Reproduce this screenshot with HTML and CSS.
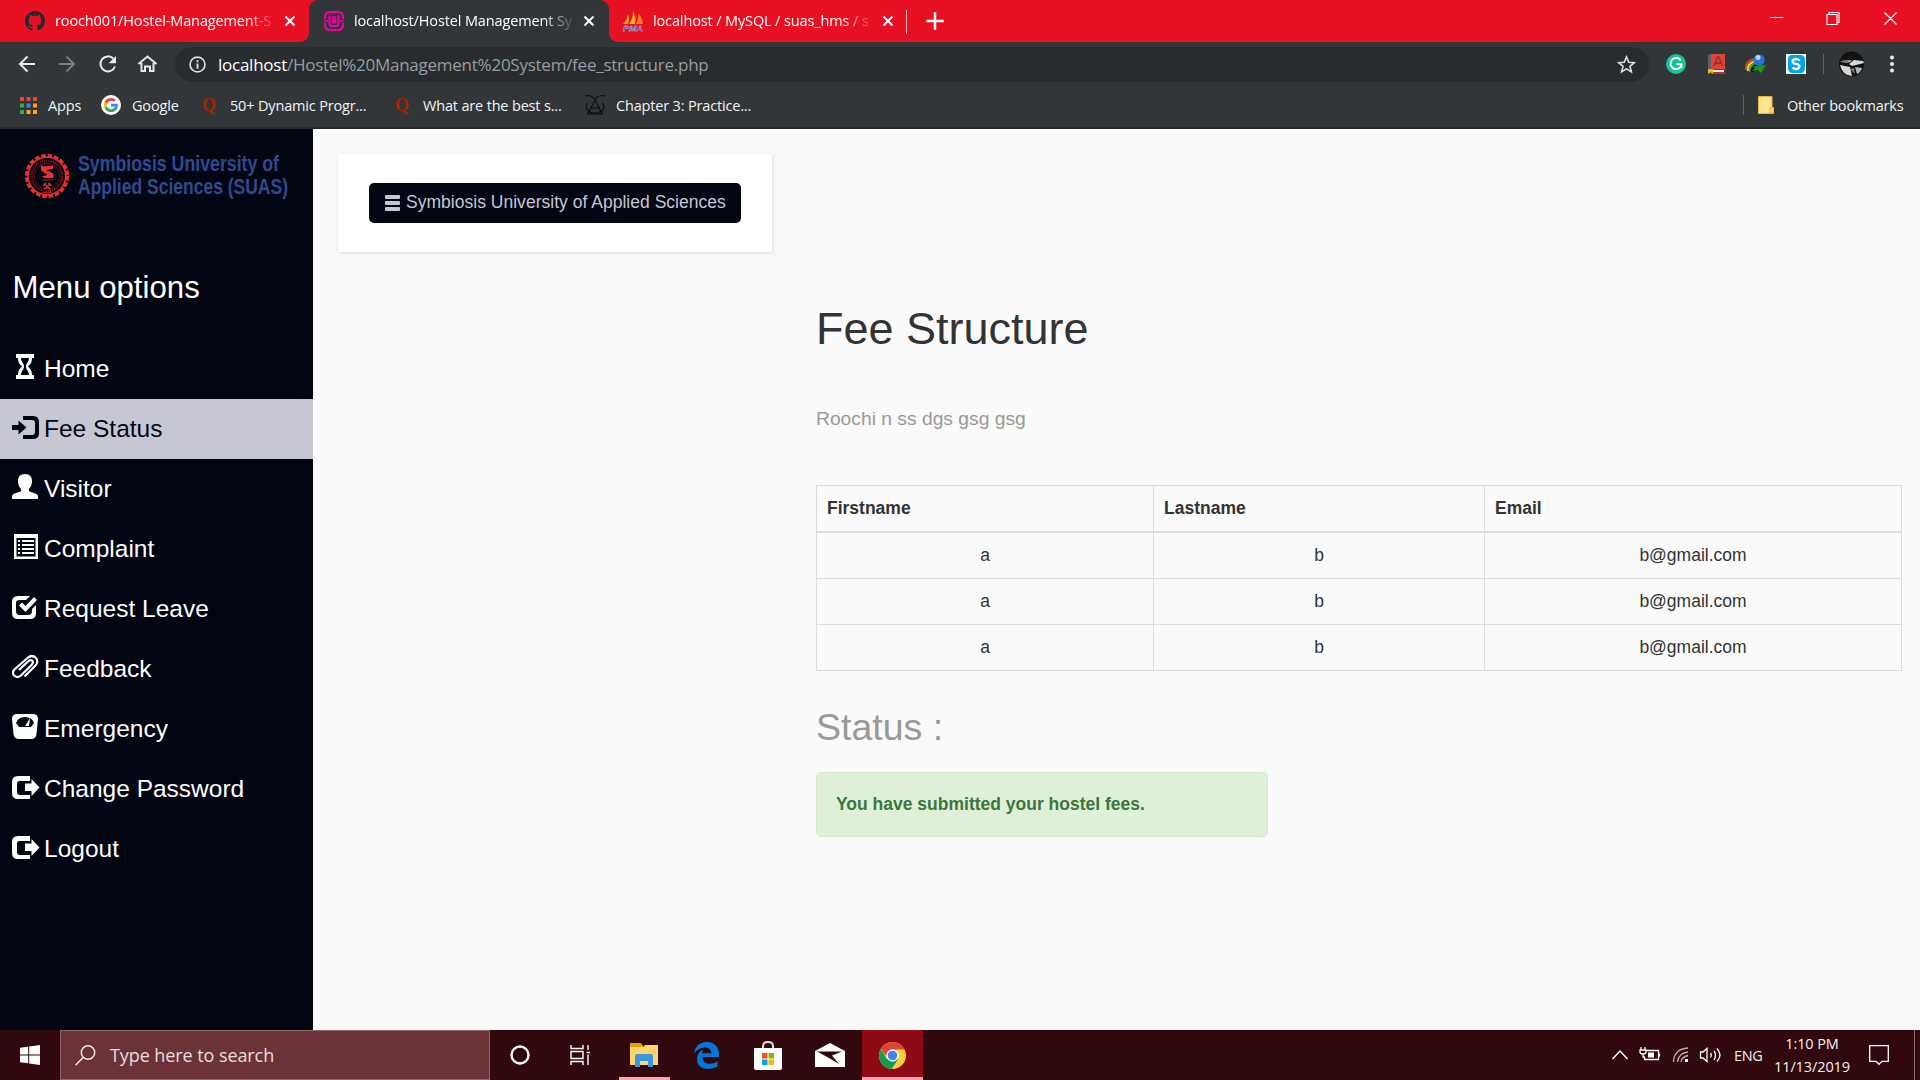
FILE: index.html
```html
<!DOCTYPE html>
<html lang="en">
<head>
<meta charset="utf-8">
<title>localhost/Hostel Management System</title>
<link rel="stylesheet" href="styles.css">
</head>
<body>
<div class="screen">
  <header class="browser">
    <div class="tabstrip">
      <div class="tab tab-first">
        <svg class="fav" viewBox="0 0 16 16"><path fill="#24292e" d="M8 0C3.58 0 0 3.58 0 8c0 3.54 2.29 6.53 5.47 7.59.4.07.55-.17.55-.38 0-.19-.01-.82-.01-1.49-2.01.37-2.53-.49-2.69-.94-.09-.23-.48-.94-.82-1.13-.28-.15-.68-.52-.01-.53.63-.01 1.08.58 1.23.82.72 1.21 1.87.87 2.33.66.07-.52.28-.87.51-1.07-1.78-.2-3.64-.89-3.64-3.95 0-.87.31-1.59.82-2.15-.08-.2-.36-1.02.08-2.12 0 0 .67-.21 2.2.82.64-.18 1.32-.27 2-.27s1.36.09 2 .27c1.53-1.04 2.2-.82 2.2-.82.44 1.1.16 1.92.08 2.12.51.56.82 1.27.82 2.15 0 3.07-1.87 3.75-3.65 3.95.29.25.54.73.54 1.48 0 1.07-.01 1.93-.01 2.2 0 .21.15.46.55.38A8.01 8.01 0 0 0 16 8c0-4.42-3.58-8-8-8z"/></svg>
        <span class="tab-title">rooch001/Hostel-Management-S</span>
        <svg class="tab-close" viewBox="0 0 12 12"><path d="M1.500 1.500l9 9M10.500 1.500l-9 9"/></svg>
      </div>
      <div class="tab tab-active">
        <svg class="fav" viewBox="0 0 20 20" fill="none" stroke="#f400a1"><path stroke-width="2" d="M1 8V6q0-5 5-5h8q5 0 5 5v2M1 12v2q0 5 5 5h8q5 0 5-5v-2"/><path stroke-width="1.600" d="M0 10h4M16 10h4"/><path stroke-width="2.200" d="M5.500 4.500V12q0 3 2.500 3h4q2.500 0 2.500-3V4.500"/><path stroke-width="2" d="M8.700 5v6.500h2.600V5"/></svg>
        <span class="tab-title">localhost/Hostel Management Sy</span>
        <svg class="tab-close" viewBox="0 0 12 12"><path d="M1.500 1.500l9 9M10.500 1.500l-9 9"/></svg>
      </div>
      <div class="tab tab-last">
        <svg class="fav" viewBox="0 0 20 20"><path fill="#f89c0e" d="M0 13Q4 9 5 3q2 5 0 10zM6 13Q10 8 10 0q4 7 2 13z"/><path fill="#ff7a1a" d="M13 13q3-5 2-11 5 6 5 11z"/><path fill="#ffc14a" d="M7 13Q10.500 7 10.500 2q1 6-.5 11z"/><text x="0" y="19.600" class="pma" textLength="20" lengthAdjust="spacingAndGlyphs">PMA</text></svg>
        <span class="tab-title">localhost / MySQL / suas_hms / s</span>
        <svg class="tab-close" viewBox="0 0 12 12"><path d="M1.500 1.500l9 9M10.500 1.500l-9 9"/></svg>
      </div>
      <div class="tab-divider"></div>
      <svg class="tab-new" viewBox="0 0 16 16"><path d="M8 1v14M1 8h14"/></svg>
      <svg class="win-buttons" viewBox="0 0 130 14" fill="none" stroke="#fff" stroke-width="1.100"><path d="M0 5.500h13M56.500 2.500h10v10h-10zM58.500 2.500v-2h10v10h-2M114 .5l12 12M126 .5l-12 12"/></svg>
    </div>

    <div class="toolbar">
      <svg class="nav-icons" viewBox="0 0 140 20" fill="none" stroke="#e8eaed" stroke-width="2"><path d="M17 10H2.500M9.500 2.500L2 10l7.500 7.500"/><path stroke="#7b7e81" d="M41 10h14.500M48.500 2.500L56 10l-7.500 7.500"/><path d="M95.500 4.800A7.500 7.500 0 1 0 97 12.500"/><path fill="#e8eaed" stroke="none" d="M98 2v7.300h-7.300z"/><path d="M120.500 10l9-7.500 9 7.500M123.500 9v8h3.500v-4.500h5V17h3.500V9"/></svg>
      <div class="omnibox">
        <svg class="info" viewBox="0 0 16 16"><circle cx="8" cy="8" r="7" fill="none" stroke="#dcdee0" stroke-width="1.600"/><path d="M8 7v5M8 4v1.800" stroke="#dcdee0" stroke-width="1.800"/></svg>
        <span class="url"><b>localhost</b>/Hostel%20Management%20System/fee_structure.php</span>
        <svg class="star" viewBox="0 0 18 18"><path d="M9 1.800l2.100 5 5.300.4-4.100 3.500 1.300 5.200L9 13.100l-4.600 2.800 1.300-5.200L1.600 7.200l5.300-.4z" fill="none" stroke="#dcdee0" stroke-width="1.500"/></svg>
      </div>
      <svg class="extensions" viewBox="0 0 232 28">
        <circle cx="10" cy="14" r="10" fill="#15c39a"/><path d="M14.800 10.500a5.600 5.600 0 1 0 .6 5M10.500 14.200h5v4" fill="none" stroke="#fff" stroke-width="1.900"/>
        <path fill="#5c6065" d="M42 4.500h4v19h-4z"/><path fill="#db4437" d="M45 4h14v15.500H45z"/><path fill="#eee" d="M46 20h12v2H46z"/><path fill="#b93221" d="M46 22h13v2H46z"/><path fill="#f4b400" d="M42 19h5v5l-2.500-2-2.500 2z"/><path d="M48 16l3.700-9h1l3.800 9M49.500 13h5.500" fill="none" stroke="#a52d25" stroke-width="1.800"/>
        <path fill="none" stroke="#d8402f" stroke-width="2" d="M80 20q-1-9 9-11"/><path fill="none" stroke="#f1d92c" stroke-width="2" d="M82 21q-1-8 8-10"/><path fill="none" stroke="#3aa53a" stroke-width="2" d="M84 22q-1-7 7-9"/><path d="M86 22q0-6 6-7" fill="none" stroke="#111" stroke-width="3"/><circle cx="93" cy="10" r="5.800" fill="#2c6edb"/><circle cx="92" cy="7.500" r="2.500" fill="#b8d4ff"/><path fill="#159b1c" d="M86 16.500l14-1.500-5 8-3-3-6 1 3-3z"/>
        <path fill="#f4f8fb" d="M120 4h20v20h-20z"/><path fill="#00a5e6" d="M122 9q0-4 4-4h8q5 0 5 5v8q0 5-5 5h-7q-5 0-5-5z"/><path d="M134 10.500q-3-2-6-1t0 4l3 .7q4 1.500 1.500 4.200-3 1.500-6-.8" fill="none" stroke="#fff" stroke-width="2.400"/>
        <path d="M157.500 4v20" stroke="#606367"/>
        <circle cx="185.500" cy="14" r="12.500" fill="#111"/><path fill="#d7d7d7" d="M174 15l10 2 2 9q-10-1-12-11zM188 10l9 1 1 2-12 3-3-2zM179 11l7-1-2 2-5 1z"/><path fill="#b7b7b7" d="M189 17l7 1q-1 4-5 6z"/><path fill="#777" d="M174 12q4-3 11-2l-5 3zM184 19l4-1 1 6z"/>
        <g fill="#e8eaed"><circle cx="226" cy="7.500" r="2"/><circle cx="226" cy="14" r="2"/><circle cx="226" cy="20.500" r="2"/></g>
      </svg>
    </div>

    <nav class="bookmarks">
      <a class="bm bm-apps"><svg class="apps" viewBox="0 0 17 17"><path fill="#ea4335" d="M0 0h4v4H0zM6.500 0h4v4h-4zM13 0h4v4h-4z"/><path fill="#34a853" d="M0 6.500h4v4H0zM0 13h4v4H0z"/><path fill="#2d8cf0" d="M6.500 6.500h4v4h-4z"/><path fill="#fba60b" d="M13 6.500h4v4h-4zM6.500 13h4v4h-4zM13 13h4v4h-4z"/></svg>Apps</a>
      <a class="bm bm-google"><svg class="fav" viewBox="0 0 48 48"><circle cx="24" cy="24" r="24" fill="#fff"/><g transform="translate(7 7) scale(.71)"><path fill="#EA4335" d="M24 9.500c3.540 0 6.710 1.220 9.210 3.600l6.850-6.850C35.900 2.380 30.470 0 24 0 14.620 0 6.510 5.380 2.560 13.220l7.980 6.190C12.430 13.720 17.740 9.500 24 9.500z"/><path fill="#4285F4" d="M46.980 24.550c0-1.570-.15-3.090-.38-4.550H24v9.020h12.940c-.58 2.960-2.260 5.480-4.780 7.180l7.730 6c4.510-4.180 7.090-10.360 7.090-17.650z"/><path fill="#FBBC05" d="M10.530 28.590c-.48-1.450-.76-2.990-.76-4.590s.27-3.140.76-4.590l-7.980-6.190C.92 16.460 0 20.120 0 24c0 3.880.92 7.540 2.560 10.780l7.970-6.190z"/><path fill="#34A853" d="M24 48c6.480 0 11.930-2.130 15.890-5.810l-7.730-6c-2.150 1.450-4.920 2.300-8.160 2.300-6.260 0-11.570-4.220-13.470-9.910l-7.980 6.190C6.510 42.620 14.620 48 24 48z"/></g></svg>Google</a>
      <a class="bm bm-q1"><span class="quora">Q</span>50+ Dynamic Progr...</a>
      <a class="bm bm-q2"><span class="quora">Q</span>What are the best s...</a>
      <a class="bm bm-ch"><svg class="fav" viewBox="0 0 20 20" fill="none" stroke="#0a0b0c" stroke-width="1.100"><path d="M0 .8h4q4 0 7 6t6 12M20 .8h-4q-4 0-7 6t-6 12M6 13h8M2 19h16"/><path d="M2.500 8Q-1 13 4 16.500t12 0Q21 13 17.500 8"/></svg>Chapter 3: Practice...</a>
      <div class="bm-divider"></div>
      <a class="bm bm-other"><svg class="folder" viewBox="0 0 16 18"><path fill="#ffe391" stroke="#e5b93c" d="M.500.500h13.500v11h1.500v6H.500z"/><path fill="#ffd35c" stroke="#e5b93c" d="M12 12h3.500v5H12z"/></svg>Other bookmarks</a>
    </nav>
  </header>

  <div class="page">
    <aside class="sidebar">
      <svg class="logo" viewBox="0 0 270 50">
        <circle cx="23" cy="23" r="20.600" fill="none" stroke="#e8322f" stroke-width="3" stroke-dasharray="4.670 1.800"/>
        <circle cx="23" cy="23" r="18.800" fill="none" stroke="#e8322f" stroke-width="1.600"/>
        <circle cx="23" cy="23" r="15.200" fill="none" stroke="#a52026" stroke-width="2" stroke-dasharray="1 1.200"/>
        <circle cx="23" cy="23" r="12.800" fill="none" stroke="#8c1c22" stroke-width=".7"/>
        <path fill="#e8322f" d="M17 12l3 1.500 9-1v3.500l-7 1 7.500 3.500v4.500h-9l-3-1.500 6-1.500-6.500-4.500z"/><path d="M20 30.500l6.500 6M26.500 30.500l-6.500 6M19 33l3-3M27.500 33l-3-3" stroke="#e8322f" stroke-width="1.300"/><path d="M18 27h11M18 39.500h10" stroke="#a52026"/>
        <text x="54" y="18" textLength="201" lengthAdjust="spacingAndGlyphs">Symbiosis University of</text>
        <text x="54" y="41" textLength="210" lengthAdjust="spacingAndGlyphs">Applied Sciences (SUAS)</text>
      </svg>
      <h3 class="menu-title">Menu options</h3>
      <ul class="menu">
        <li><svg class="gl" viewBox="0 0 28 26"><path fill-rule="evenodd" d="M4 0h18v4h-2c0 5-2 6.500-4 8.500 2 2 4 3.500 4 8.500h2v4H4v-4h2c0-5 2-6.500 4-8.500C8 10.500 6 9 6 4H4zM9 4c0 4 3 5 3 8.500S9 17 9 21h8c0-4-3-5-3-8.500S17 8 17 4z"/></svg>Home</li>
        <li class="active"><svg class="gl" viewBox="0 0 28 26"><path d="M0 11h6.500V6.500l8 7-8 7V16H0z"/><path d="M11 2h10q6 0 6 6v11q0 6-6 6H11v-4h9q3 0 3-3V9q0-3-3-3h-9z"/></svg>Fee Status</li>
        <li><svg class="gl" viewBox="0 0 28 26"><path d="M13 0c5 0 7 3 7 7 0 3-1 6-3 8v2c3 2 9 2.500 9 5v3H0v-3c0-2.500 6-3 9-5v-2c-2-2-3-5-3-8 0-4 2-7 7-7z"/></svg>Visitor</li>
        <li><svg class="gl" viewBox="0 0 28 26"><path fill-rule="evenodd" d="M2 0h24v25H2zM4.500 4v18.500h19V4z"/><path d="M6 6h2v2H6zM10 6h12v2H10zM6 10h2v2H6zM10 10h12v2H10zM6 14h2v2H6zM10 14h12v2H10zM6 18h2v2H6zM10 18h12v2H10z"/></svg>Complaint</li>
        <li><svg class="gl" viewBox="0 0 28 26"><path d="M6 2h12l-4 4H7.500Q4 6 4 9v8q0 4 4 4h8q4 0 4-4v-2l4-4v8q0 6-6 6H6q-6 0-6-6V8q0-6 6-6z"/><path d="M7 11.500l3-3 3.500 3.500L22 3l3 3-11.500 12z"/></svg>Request Leave</li>
        <li><svg class="gl" viewBox="0 0 28 26"><path fill="none" stroke="currentColor" stroke-width="2.200" d="M12.500 22.500L23 12q4-4 1-8-4-4-8.500 0L3 15q-3.500 3-1 6.500 3.500 3 7 0L19.500 11q2.500-3 .5-4.500-2-1-4 1L7 16"/></svg>Feedback</li>
        <li><svg class="gl" viewBox="0 0 28 26"><path fill-rule="evenodd" d="M5 0h16q5 0 5 5l-1.500 15q-.5 5-5.500 5H7q-5 0-5.500-5L0 5q0-5 5-5zM4 9l3 4h12l3-4q-2-6-9-6T4 9z"/><path d="M13 12l5-8-1 8z"/></svg>Emergency</li>
        <li><svg class="gl" viewBox="0 0 28 26"><path d="M18 7H7.500Q5 7 5 10v8q0 3 3 3h10v4H6q-6 0-6-6V8q0-6 6-6h12z"/><path d="M13 9.500h6.500V5l8 8.500-8 8.500v-5H13z"/></svg>Change Password</li>
        <li><svg class="gl" viewBox="0 0 28 26"><path d="M18 7H7.500Q5 7 5 10v8q0 3 3 3h10v4H6q-6 0-6-6V8q0-6 6-6h12z"/><path d="M13 9.500h6.500V5l8 8.500-8 8.500v-5H13z"/></svg>Logout</li>
      </ul>
    </aside>
    <div class="content">
      <div class="navbar"><button class="brand-btn"><svg class="burger" viewBox="0 0 15 16"><path d="M1 0h13q1 0 1 1v2q0 1-1 1H1Q0 4 0 3V1q0-1 1-1zM1 6h13q1 0 1 1v2q0 1-1 1H1q-1 0-1-1V7q0-1 1-1zM1 12h13q1 0 1 1v2q0 1-1 1H1q-1 0-1-1v-2q0-1 1-1z"/></svg><span>Symbiosis University of Applied Sciences</span></button></div>
      <main class="main">
        <h1>Fee Structure</h1>
        <p class="note">Roochi n ss dgs gsg gsg</p>
        <table class="fees">
          <colgroup><col class="c1"><col class="c2"><col class="c3"></colgroup>
          <thead><tr><th>Firstname</th><th>Lastname</th><th>Email</th></tr></thead>
          <tbody>
            <tr><td>a</td><td>b</td><td>b@gmail.com</td></tr>
            <tr><td>a</td><td>b</td><td>b@gmail.com</td></tr>
            <tr><td>a</td><td>b</td><td>b@gmail.com</td></tr>
          </tbody>
        </table>
        <h2>Status :</h2>
        <div class="alert">You have submitted your hostel fees.</div>
      </main>
    </div>
  </div>

  <footer class="taskbar">
    <div class="start"><svg class="i-start" viewBox="0 0 20 20"><path fill="#fff" d="M0 2.800L8.200 1.700v7.800H0zM9.200 1.500L20 0v9.500H9.200zM0 10.500h8.200v7.800L0 17.200zM9.200 10.500H20V20L9.200 18.500z"/></svg></div>
    <div class="search"><svg class="i-search" viewBox="0 0 21 21" fill="none" stroke="#f0e6e7" stroke-width="1.500"><circle cx="13" cy="7.500" r="6.700"/><path d="M8.300 12.300L.500 20.300"/></svg>Type here to search</div>
    <div class="task"><svg class="i20" viewBox="0 0 20 20"><circle cx="10" cy="10" r="8.500" fill="none" stroke="#fff" stroke-width="2.400"/></svg></div>
    <div class="task task-view"><svg class="i20" viewBox="0 0 20 20" fill="none" stroke="#fff" stroke-width="1.400"><path d="M1 0v3.500h12V0M1 20v-3.500h12V20M1 6.500h12v7H1zM18 0v5M18 9.500V20M16.500 7.500h3.500"/></svg></div>
    <div class="task open"><svg class="i-exp" viewBox="0 0 28 24"><path fill="#e0a10a" d="M0 0h11l2 3v5H0z"/><path fill="#ffd668" d="M0 4h13l2-2h13v20H0z"/><path fill="#3a96dd" d="M5 24V13q0-2 2-2h14q2 0 2 2v11h-5v-6h-8v6z"/></svg></div>
    <div class="task task-edge"><svg class="i-edge" viewBox="0 0 25 27"><path fill="#0078d7" d="M0 12C1 4 6 0 13 0c8 0 12 6 12 12v3H8.500c0 8 9 8 15 4.500v5C13 29.500 3 27 3 17c0-5 3-8 6.500-9.500C8.500 9 8.300 10 8.300 11.200h9C17.500 4 6 3 0 12z"/></svg></div>
    <div class="task task-store"><svg class="i-store" viewBox="0 0 28 29"><path d="M9 8V5q0-4 5-4t5 4v3" fill="none" stroke="#ddd" stroke-width="2"/><path fill="#fff" d="M0 7h28v20q0 2-2 2H2q-2 0-2-2z"/><path fill="#f25022" d="M8 12h5.500v5.500H8z"/><path fill="#7fba00" d="M14.500 12H20v5.500h-5.500z"/><path fill="#00a4ef" d="M8 18.500h5.500V24H8z"/><path fill="#ffb900" d="M14.500 18.500H20V24h-5.500z"/></svg></div>
    <div class="task task-mail"><svg class="i-mail" viewBox="0 0 30 24"><path fill="#fff" d="M0 8L15 0l15 8v16H0z"/><path fill="#30080d" d="M2 8.500h25l-10 4 7 8.500L14 15z"/></svg></div>
    <div class="task open chrome"><svg class="i-chrome" viewBox="0 0 28 28"><circle cx="14" cy="14" r="14" fill="#ffcd40"/><path fill="#0f9d58" d="M1.900 7A14 14 0 0 0 13 28l7-10.500-6-3.500-6 3.500z"/><path fill="#db4437" d="M14 14H7L1.900 7A14 14 0 0 1 26.500 7.800H14z"/><circle cx="14" cy="14" r="6.400" fill="#fff"/><circle cx="14" cy="14" r="5" fill="#4285f4"/></svg></div>
    <svg class="tray" viewBox="0 0 110 24" fill="none" stroke="#fff" stroke-width="1.300"><path d="M.5 16l7.500-8 7.500 8"/><path d="M34.500 7.500h12v9h-14v-3M47.500 10.500v3M29 4v3M33 4v3M28 7h6v2q0 2-3 2t-3-2zM31 11v3h1.500"/><path fill="#fff" stroke="none" d="M36 9.500h6v5h-6z"/><path stroke="#bfaeb0" d="M61.500 19Q62 6 76 5M65.500 19q1-9 10.500-10M69 19q.5-5 7-6.500"/><path fill="#fff" stroke="none" d="M73 16h3v3h-3z"/><path d="M88.500 9h2.500l4-3.500v13L91 15h-2.500zM98.500 10q1.500 2 0 4.500M102 8q3 4 0 9M105 5.500q6 6.500 0 13"/></svg>
    <span class="lang">ENG</span>
    <div class="clock"><span class="time">1:10 PM</span><span class="date">11/13/2019</span></div>
    <svg class="i-note" viewBox="0 0 20 20"><path d="M.7.700h18.600v15.600H13l-3 3-3-3H.700z" fill="none" stroke="#fff" stroke-width="1.300"/></svg>
    <div class="peek"></div>
  </footer>
</div>
</body>
</html>
```
FILE: styles.css
```css
* { box-sizing: border-box; }
body { margin: 0; font-family: "Liberation Sans", Arial, sans-serif; font-size: 17.5px; line-height: 25px; color: #333; }
svg { display: block; flex: none; }
.screen { width: 1920px; height: 1080px; display: flex; flex-direction: column; overflow: hidden; }

.browser { height: 129px; background: #323639; color: #f1f3f4; font-family: "Open Sans", "Noto Sans", sans-serif; border-bottom: 2px solid #27292c; }
.tabstrip { height: 42px; display: flex; background: linear-gradient(#e81123 20px, #323639 20px); font-size: 14.5px; line-height: 40px; letter-spacing: -.13px; }
.tab { display: flex; align-items: center; height: 42px; background: #e81123; color: #fff; padding-bottom: 1px; }
.tab-first { width: 309px; padding-left: 25px; border-bottom-right-radius: 9px; }
.tab-active { width: 300px; padding-left: 15px; background: #323639; border-radius: 9px 9px 0 0; }
.tab-last { width: 298px; padding-left: 14px; border-bottom-left-radius: 9px; }
.fav { width: 20px; height: 20px; overflow: visible; }
.pma { font: italic bold 8px "Liberation Sans", sans-serif; fill: #31459a; stroke: #d8d8f0; stroke-width: .3px; letter-spacing: 0; }
.tab-title { width: 220px; margin-left: 10px; white-space: nowrap; -webkit-mask-image: linear-gradient(90deg, #000 188px, transparent 222px); mask-image: linear-gradient(90deg, #000 188px, transparent 222px); }
.tab-close { width: 12px; height: 12px; margin-left: 9px; fill: none; stroke: #fff; stroke-width: 1.9; }
.tab-divider { width: 13px; background: linear-gradient(#ffb5bb, #ffb5bb) 0 10px / 1px 24px no-repeat #e81123; margin-left: -1px; }
.tab-new { width: 42px; height: 42px; padding: 13px 16px 13px 6px; background: #e81123; fill: none; stroke: #fff; stroke-width: 2; }
.tab-new { padding: 11px 16px 11px 6px; }
.win-buttons { flex: 1; height: 42px; padding: 12px 17px 16px 807px; background: #e81123; }

.toolbar { height: 44px; display: flex; align-items: center; }
.nav-icons { width: 140px; height: 20px; margin-left: 18px; }
.omnibox { width: 1474px; height: 35px; margin-left: 17px; border-radius: 18px; background: #282c2f; display: flex; align-items: center; padding: 0 13px 0 14px; margin-top: 1px; }
.info { width: 17px; height: 17px; }
.url { flex: 1; margin-left: 12px; font-size: 17px; letter-spacing: -.25px; color: #989da1; white-space: nowrap; }
.url b { font-weight: 400; color: #fff; }
.star { width: 19px; height: 19px; }
.extensions { width: 232px; height: 28px; margin-left: 17px; }

.bookmarks { display: flex; align-items: center; height: 38px; font-size: 14.5px; letter-spacing: -.17px; padding-left: 20px; }
.bm { display: flex; align-items: center; white-space: nowrap; }
.apps { width: 17px; height: 17px; margin-right: 11px; }
.bm .fav { margin-right: 11px; }
.bm-apps { width: 81px; }
.bm-google { width: 101px; }
.bm-q1 { width: 193px; }
.bm-q2 { width: 190px; }
.bm-ch { width: 1158px; }
.quora { width: 28px; font: bold 18px "Liberation Serif", serif; color: #a82400; }
.bm-divider { width: 1px; height: 20px; background: #606367; margin-right: 14px; }
.folder { width: 16px; height: 18px; margin-right: 13px; }

.page { height: 901px; display: flex; background: #fafafa; }
.sidebar { width: 313px; background: #020512; color: #fff; }
.logo { width: 270px; height: 50px; margin: 24px 0 0 24px; }
.logo text { font: bold 22.5px "Liberation Sans Narrow", "Liberation Sans", sans-serif; fill: #2f4a8f; }
.menu-title { margin: 68px 0 0 12.5px; height: 68px; font-size: 31.2px; line-height: 34px; font-weight: 400; }
.menu { list-style: none; margin: 0; padding: 0; }
.menu li { height: 60px; padding: 11.5px 12.5px; display: flex; font-size: 24.5px; line-height: 35px; }
.menu .active { background: #c7c7d3; color: #020512; }
.gl { width: 28px; height: 26px; margin: 3px 4px 0 -.5px; fill: currentColor; }

.content { display: flex; align-items: flex-start; }
.navbar { width: 434px; height: 98px; margin: 25px 0 0 25px; padding: 29px 31px; background: #fff; box-shadow: 1px 1px 4px rgba(0,0,0,.13); }
.brand-btn { width: 372px; height: 40px; display: flex; align-items: center; border: 0; border-radius: 5px; padding: 0 0 1px 16px; background: #020512; color: #c7c7d3; font: 17.5px/25px "Liberation Sans", Arial, sans-serif; letter-spacing: .02px; white-space: nowrap; }
.burger { width: 15px; height: 16px; margin-right: 6px; fill: currentColor; }
.main { width: 1085px; margin-left: 44px; padding-top: 175px; }
h1 { margin: 0; font-size: 45px; line-height: 50px; font-weight: 400; }
.note { margin: 48px 0 50px; font-size: 19.25px; line-height: 33px; color: #999; }
.fees { width: 1085px; border-collapse: collapse; table-layout: fixed; border: 1px solid #ddd; }
.c1 { width: 337px; } .c2 { width: 331px; } .c3 { width: 417px; }
.fees th, .fees td { border: 1px solid #ddd; padding: 10px; text-align: center; height: 46px; line-height: 25px; }
.fees th { text-align: left; border-bottom-width: 2px; }
h2 { margin: 35px 0 24px; font-size: 37.5px; line-height: 42px; font-weight: 400; color: #999; }
.alert { width: 452px; height: 65px; padding: 19px; border: 1px solid #d6e9c6; border-radius: 5px; background: #dff0d8; color: #3c763d; font-weight: 700; }

.taskbar { height: 50px; display: flex; align-items: center; background: #30080d; color: #f5f0f0; font-family: "Open Sans", "Noto Sans", sans-serif; }
.start { width: 60px; padding-left: 20px; }
.i-start, .i20 { width: 20px; height: 20px; }
.search { width: 430px; height: 50px; display: flex; align-items: center; background: #6b3338; border: 1px solid #8f6367; padding-left: 14px; font-size: 18px; letter-spacing: -.08px; color: #e9dcdd; }
.i-search { width: 21px; height: 21px; margin-right: 14px; }
.task { width: 60px; height: 50px; display: flex; align-items: center; justify-content: center; }
.task-view { width: 69px; padding-right: 29px; justify-content: flex-end; }
.task-view + .open { width: 51px; padding-right: 2px; }
.task-edge { width: 74px; padding-right: 2px; }
.task-store { width: 50px; padding-right: 2px; }
.task-mail { width: 68px; padding-left: 3px; }
.task.open { border-bottom: 3px solid #ffa3ae; padding-top: 3px; }
.chrome { width: 61px; padding-right: 1px; background: #8e0a17; }
.i-exp { width: 28px; height: 24px; }
.i-edge { width: 25px; height: 27px; }
.i-store { width: 28px; height: 29px; }
.i-mail { width: 30px; height: 24px; }
.i-chrome { width: 27px; height: 27px; }
.tray { width: 110px; height: 24px; margin-left: auto; }
.lang { width: 32px; margin-left: 12px; font-size: 14.5px; letter-spacing: -.3px; }
.clock { width: 90px; margin-left: 1px; display: flex; flex-direction: column; align-items: center; font-size: 14.5px; line-height: 23px; letter-spacing: -.1px; }
.i-note { width: 20px; height: 20px; margin: 0 25px 0 12px; }
.peek { width: 6px; height: 50px; border-left: 1px solid #8a6f72; }
```
